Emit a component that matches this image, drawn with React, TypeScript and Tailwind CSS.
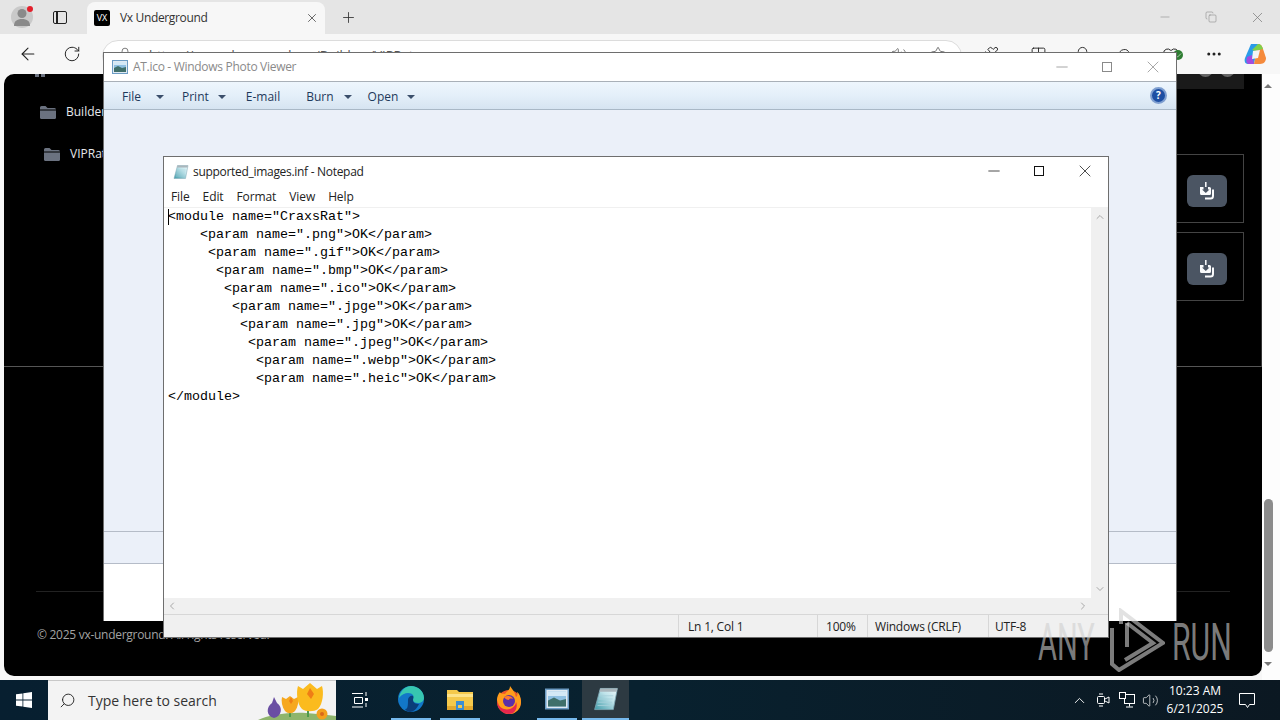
import { ArrowLeft, RotateCw, Plus, X, Minus, Copy, Ellipsis, ChevronUp, ChevronDown, ChevronLeft, ChevronRight, Search, Volume2, Star, Puzzle, Columns2, Bell, Cloud, Heart, Check, Lock } from 'lucide-react';

const noteLines = [
  '<module name="CraxsRat">',
  '    <param name=".png">OK</param>',
  '     <param name=".gif">OK</param>',
  '      <param name=".bmp">OK</param>',
  '       <param name=".ico">OK</param>',
  '        <param name=".jpge">OK</param>',
  '         <param name=".jpg">OK</param>',
  '          <param name=".jpeg">OK</param>',
  '           <param name=".webp">OK</param>',
  '           <param name=".heic">OK</param>',
  '</module>',
];

function FolderIcon() {
  return (
    <svg className="shrink-0" width="16" height="13" viewBox="0 0 16 13">
      <path d="M0 1.500A1.500 1.500 0 0 1 1.500 0h4l2 2h7A1.500 1.500 0 0 1 16 3.500H0z" fill="#6b7280" />
      <path d="M0 4.500h16v7A1.500 1.500 0 0 1 14.500 13h-13A1.500 1.500 0 0 1 0 11.500z" fill="#6b7280" />
    </svg>
  );
}

function DownloadButton() {
  return (
    <div className="flex h-8 w-10 items-center justify-center rounded-md bg-[#4b5563]">
      <svg width="16" height="18" viewBox="0 0 16 18">
        <path d="M6 0h1.600v5H6z" fill="#f3f4f6" />
        <path d="M1 5h3.500v2.500H3L6.800 11l3.700-3.500H9V5h1.500A1.500 1.500 0 0 1 12 6.500v5a1.500 1.500 0 0 1-1.500 1.500h-8A1.500 1.500 0 0 1 1 11.500z" fill="#f9fafb" />
        <path d="M14 7.500v6.500a2.500 2.500 0 0 1-2.500 2.500H6" stroke="#f9fafb" strokeWidth="2" fill="none" />
      </svg>
    </div>
  );
}

function Caret({ color = '#3b4f6b' }: { color?: string }) {
  return (
    <svg width="8" height="4" viewBox="0 0 8 4">
      <path d="M0 0h8L4 4z" fill={color} />
    </svg>
  );
}

function PhotoIcon({ size = 16 }: { size?: number }) {
  return (
    <svg width={size} height={size} viewBox="0 0 16 16">
      <rect x="0.500" y="1.500" width="15" height="13" fill="#dfe9f2" stroke="#6c9cc4" />
      <rect x="2" y="3" width="12" height="10" fill="#8fc0e2" />
      <path d="M2 9l4-2 4 2 4-1v5H2z" fill="#3f6f6a" />
      <path d="M2 3h12v3H2z" fill="#d3e8f6" />
    </svg>
  );
}

function NotepadIcon({ size = 16 }: { size?: number }) {
  return (
    <svg width={size} height={size} viewBox="0 0 16 16">
      <defs>
        <linearGradient id="notePage" x1="0" y1="1" x2="1" y2="0">
          <stop offset="0" stopColor="#3f9aa8" />
          <stop offset="0.600" stopColor="#bfe3ea" />
          <stop offset="1" stopColor="#eef8fa" />
        </linearGradient>
      </defs>
      <path d="M4.500 1.500H15L12.500 14.500H1z" fill="url(#notePage)" stroke="#7ea7b5" strokeWidth="0.500" />
      <path d="M4.500 1.500H15l-.4 2H4z" fill="#aab6bc" />
      <path d="M4 6h8.500M3.600 8h8.500M3.200 10h8.500M2.800 12h8.500" stroke="#a6d0da" strokeWidth="0.500" />
    </svg>
  );
}

function EdgeIcon() {
  return (
    <svg width="26" height="26" viewBox="0 0 26 26">
      <circle cx="13" cy="13" r="13" fill="#1277c8" />
      <path d="M1 12C2 5 7 0 13 0c7 0 13 5 13 12 0 3-3 5-6 5-3 0-5-1-5-3 0-3 1-3 0-5-2-3-10-3-14 3z" fill="#37c6b0" />
      <path d="M10 14c0-3 3-5 5-4 1 1 0 3 0 4 0 3 3 4 6 4-2 5-6 8-9 8-2 0-4-1-5-3 3 1 3-5 3-9z" fill="#0a3e7a" />
    </svg>
  );
}

function ExplorerIcon() {
  return (
    <svg width="26" height="22" viewBox="0 0 26 22">
      <path d="M0 2h10l2 2h14v16H0z" fill="#f5c94c" />
      <path d="M0 6h26v3H0z" fill="#fde38a" />
      <path d="M0 18h26v4H0z" fill="#e3a92f" />
      <rect x="9" y="13" width="8" height="9" fill="#3c8fd6" />
      <rect x="11" y="17" width="4" height="3" fill="#f5c94c" />
    </svg>
  );
}

function FirefoxIcon() {
  return (
    <svg width="26" height="28" viewBox="0 0 26 28">
      <circle cx="13" cy="16" r="12" fill="#f0562c" />
      <path d="M13 28A12 12 0 0 0 25 16c0-5-2-9-4-10 1 3 0 4-1 5-1-5-4-8-6-11 0 4-3 5-5 8-3 0-5-1-5-2-2 2-3 5-3 8 2 6 6 14 12 14z" fill="#ff9d1c" />
      <path d="M13 28c-6 0-11-5-12-11 3 6 10 8 15 5 3-2 4-4 4-6 2 4 0 12-7 12z" fill="#e6264d" />
      <circle cx="13" cy="15" r="6" fill="#5b2fa8" />
      <path d="M8 11c3-2 8-1 9 2-3-1-4 0-4 1-2 0-4-1-5-3z" fill="#ff7a2b" />
    </svg>
  );
}

function Flowers() {
  return (
    <svg className="shrink-0" width="78" height="39" viewBox="0 0 78 39">
      <path d="M0 39c10-5 30-8 48-7 12 1 22 2 30 3v4z" fill="#8fb56c" />
      <path d="M16 37c-8-2-8-11-2-15l2-6 3 6c6 4 5 13-3 15z" fill="#6a4fa3" />
      <path d="M50 36V26M32 36v-6" stroke="#4f9a4a" strokeWidth="2" />
      <path d="M27 30c-3-4-4-10-3-14l4 2 4-3 4 3 4-2c1 4 0 10-3 14-3 3-7 3-10 0z" fill="#f6a81f" />
      <path d="M31 20l2-4 2 4-2 3z" fill="#ef7d16" />
      <path d="M44 28c-5-5-6-17-4-23l5 3 7-6 7 6 5-3c2 6 1 18-4 23-4 3-12 3-16 0z" fill="#fbbb1e" />
      <path d="M49 13l3-6 4 6-3 5z" fill="#ef7d16" />
      <circle cx="64" cy="33" r="5.500" fill="#f3a01d" />
      <circle cx="64" cy="33" r="2" fill="#d9671c" />
    </svg>
  );
}

function WindowButtons({ tone }: { tone: string }) {
  return (
    <>
      <Minus size={18} strokeWidth={1} color={tone} />
      <div className="h-[10px] w-[10px] border" style={{ borderColor: tone }} />
      <X size={20} strokeWidth={0.900} color={tone} />
    </>
  );
}

function BrowserChrome() {
  return (
    <>
      {/* Tab strip */}
      <div className="flex h-[34px] items-center bg-[#e5e5e5]">
        <div className="relative ml-[11px] flex h-[22px] w-[22px] items-center justify-center rounded-full bg-[#c9c9c9]">
          <svg width="16" height="18" viewBox="0 0 16 18">
            <circle cx="8" cy="5.500" r="4.500" fill="#8a8a8a" />
            <path d="M0 18c0-5 3-7 8-7s8 2 8 7z" fill="#8a8a8a" />
          </svg>
          <span className="absolute right-0 top-0 h-[6px] w-[6px] rounded-full bg-[#e3202c]" />
        </div>
        <div className="ml-[20px] h-[13px] w-[14px] rounded-[2px] border-[1.500px] border-[#222] pl-[2px]">
          <div className="h-full w-[1.500px] bg-[#222]" />
        </div>
        <div className="ml-[20px] flex h-[32px] w-[238px] items-center self-end rounded-t-lg bg-[#f7f7f7] pl-[7px] pr-[6px]">
          <div className="flex h-4 w-4 items-center justify-center rounded-[2px] bg-black text-[9px] text-white">VX</div>
          <span className="ml-[10px] flex-1 text-[12px] tracking-[-0.350px] text-[#333]">Vx Underground</span>
          <X size={14} strokeWidth={1.500} color="#555" />
        </div>
        <div className="ml-[15px]">
          <Plus size={17} strokeWidth={1.200} color="#333" />
        </div>
        <div className="ml-auto mr-[14px] flex w-[108px] items-center justify-between">
          <Minus size={14} strokeWidth={1} color="#8a8a8a" />
          <Copy size={12} strokeWidth={1.200} color="#8a8a8a" />
          <X size={17} strokeWidth={1} color="#777" />
        </div>
      </div>
      {/* Toolbar */}
      <div className="flex h-[40px] items-start bg-[#f7f7f7]">
        <div className="ml-[18px] mt-[10px]">
          <ArrowLeft size={20} strokeWidth={1.300} color="#222" />
        </div>
        <div className="ml-[25px] mt-[11px]">
          <RotateCw size={18} strokeWidth={1.300} color="#222" />
        </div>
        <div className="ml-[21px] mt-[6px] flex h-[32px] w-[860px] items-start rounded-full border border-[#dcdcdc] bg-white pl-[15px] pt-[5px] text-[13px] text-[#555]">
          <Lock size={14} strokeWidth={1.300} color="#555" className="mt-[1px]" />
          <span className="ml-[17px]">https://vx-underground.org/Builders/VIPRat</span>
          <div className="ml-auto mr-[15px] flex gap-[23px]">
            <Volume2 size={16} strokeWidth={1.200} color="#555" />
            <Star size={16} strokeWidth={1.200} color="#555" />
          </div>
        </div>
        <div className="ml-[20px] mt-[12px] flex items-start gap-[27px]">
          <Puzzle size={17} strokeWidth={1.300} color="#222" className="mr-[4px]" />
          <Columns2 size={17} strokeWidth={1.300} color="#222" />
          <Bell size={17} strokeWidth={1.300} color="#222" />
          <Cloud size={17} strokeWidth={1.300} color="#222" />
          <div className="relative">
            <Heart size={18} strokeWidth={1.300} color="#222" />
            <span className="absolute -right-[3px] top-[4px] flex h-[10px] w-[10px] items-center justify-center rounded-full bg-[#2e7d32]">
              <Check size={7} color="#fff" />
            </span>
          </div>
        </div>
        <div className="ml-[25px] mt-[11px]">
          <Ellipsis size={18} color="#222" />
        </div>
        <div className="ml-[21px] mt-[10px]">
          <svg width="22" height="20" viewBox="0 0 22 20">
            <path d="M7 0h7l-4 20H4C1 20 0 17 1 14z" fill="#2a9be8" />
            <path d="M14 0c3 0 4 2 5 5l3 9c0 3-2 6-6 6h-6z" fill="#f58a3c" />
            <path d="M14 0c3 0 4 2 5 5l-8 2-3-1z" fill="#7fd14b" />
            <path d="M3 13l5-2 2 9H5c-3 0-3-3-2-7z" fill="#a24be0" />
            <path d="M9 7l7-1-2 8-6 1z" fill="#f4f4f4" />
          </svg>
        </div>
      </div>
    </>
  );
}

function PageBehind() {
  return (
    <div className="flex min-h-0 flex-1 bg-[#f7f7f7] pl-[4px]">
      <div className="mb-[4px] flex flex-1 flex-col overflow-hidden rounded-b-[10px] rounded-l-[10px] bg-black">
        <div className="flex h-[293px] shrink-0 border-b border-r border-b-[#555] border-r-[#333]">
          <div className="w-[100px] shrink-0">
            <div className="ml-[31px] flex h-[3px] gap-[2px]">
              <span className="w-[4px] bg-[#6b7280]" />
              <span className="w-[4px] bg-[#6b7280]" />
            </div>
            <div className="ml-[36px] mt-[27px] flex h-[16px] items-center gap-[10px] text-[12px] text-[#e5e7eb]">
              <FolderIcon />
              <span>Builders</span>
            </div>
            <div className="ml-[40px] mt-[26px] flex h-[16px] items-center gap-[10px] text-[12px] text-[#e5e7eb]">
              <FolderIcon />
              <span>VIPRat</span>
            </div>
          </div>
          <div className="flex flex-1 flex-col items-end pr-[17px]">
            <div className="flex h-[15px] w-[300px] items-end justify-end gap-[7px] overflow-hidden bg-[#1a1a1a] pr-[9px]">
              <span className="mb-[12px] h-[15px] w-[15px] rounded-full bg-[#666]" />
              <span className="mb-[12px] h-[15px] w-[15px] rounded-full bg-[#666]" />
            </div>
            <div className="mt-[65px] flex h-[69px] w-[800px] items-center justify-end border border-[#444] pr-[16px] pt-[4px]">
              <DownloadButton />
            </div>
            <div className="mt-[9px] flex h-[69px] w-[800px] items-center justify-end border border-[#444] pr-[16px] pt-[4px]">
              <DownloadButton />
            </div>
          </div>
        </div>
        <div className="mx-[32px] mt-[224px] border-t border-[#222] pl-[1px] pt-[34px] text-[12px] tracking-[-0.280px] text-[#a3a3a3]">
          © 2025 vx-underground. All rights reserved.
        </div>
      </div>
      <div className="flex w-[18px] shrink-0 flex-col items-center bg-[#fdfdfd] pb-[14px] pr-[6px] pt-[10px]">
        <svg className="rotate-180" width="8" height="4" viewBox="0 0 8 4">
          <path d="M0 0h8L4 4z" fill="#777" />
        </svg>
        <div className="mt-auto h-[153px] w-[9px] rounded-full bg-[#8c8c8c]" />
        <div className="mt-[10px] flex">
          <Caret color="#777" />
        </div>
      </div>
    </div>
  );
}

function PhotoViewer() {
  return (
    <div className="absolute left-[103px] top-[52px] flex h-[569px] w-[1074px] flex-col border-x border-t border-[#6e6e6e] bg-white">
      <div className="flex h-[29px] shrink-0 items-center border-b border-[#a9b0b8] pl-[8px] pr-[13px] text-[12px] tracking-[-0.300px] text-[#8a8a8a]">
        <PhotoIcon />
        <span className="ml-[5px] flex-1">AT.ico - Windows Photo Viewer</span>
        <div className="flex w-[110px] items-center justify-between">
          <WindowButtons tone="#8a8a8a" />
        </div>
      </div>
      <div className="flex h-[28px] shrink-0 items-center border-b border-[#a9b8c6] bg-gradient-to-b from-[#eef6fd] via-[#e4eff9] to-[#d6e4f1] pl-[18px] pr-[9px] pt-[3px] text-[12px] text-[#1e395b]">
        <span>File</span>
        <span className="ml-[15px]"><Caret /></span>
        <span className="ml-[18px]">Print</span>
        <span className="ml-[9px]"><Caret /></span>
        <span className="ml-[20px]">E-mail</span>
        <span className="ml-[26px]">Burn</span>
        <span className="ml-[10px]"><Caret /></span>
        <span className="ml-[16px]">Open</span>
        <span className="ml-[9px]"><Caret /></span>
        <div className="-mt-[3px] ml-auto flex h-[17px] w-[17px] items-center justify-center rounded-full border-2 border-[#7f9fd0] bg-[#1d4fa3] text-[10px] font-bold text-white">?</div>
      </div>
      <div className="flex-1 border-b border-[#b5bcc8] bg-[#ebf0f9]" />
      <div className="h-[32px] shrink-0 border-b border-[#b5bcc8] bg-[#ebf0f9]" />
      <div className="h-[57px] shrink-0 bg-white" />
    </div>
  );
}

function Notepad() {
  return (
    <div className="absolute left-[163px] top-[156px] flex h-[482px] w-[946px] flex-col border border-[#6e6e6e] bg-white">
      <div className="flex h-[28px] shrink-0 items-center pl-[9px] pr-[13px] pt-[1px] text-[12px] tracking-[-0.300px] text-[#222]">
        <NotepadIcon />
        <span className="ml-[4px] flex-1">supported_images.inf - Notepad</span>
        <div className="-mt-[1px] flex w-[110px] items-center justify-between">
          <WindowButtons tone="#111" />
        </div>
      </div>
      <div className="flex h-[23px] shrink-0 items-center gap-[13px] border-b border-[#f0f0f0] pl-[7px] pt-[1px] text-[12px] tracking-[-0.100px] text-[#222]">
        <span>File</span>
        <span>Edit</span>
        <span>Format</span>
        <span>View</span>
        <span>Help</span>
      </div>
      <div className="flex min-h-0 flex-1">
        <div className="relative flex-1 overflow-hidden pl-[4px] font-['Liberation_Mono',monospace] text-[13.330px] leading-[18px] text-black">
          {noteLines.map((line, i) => (
            <div key={i} className="h-[18px] whitespace-pre">{line}</div>
          ))}
          <span className="absolute left-[4px] top-[1px] h-[16px] w-px bg-black" />
        </div>
        <div className="flex w-[17px] shrink-0 flex-col items-center justify-between bg-[#f0f0f0] py-[3px]">
          <ChevronUp size={12} color="#a8a8a8" strokeWidth={2} />
          <ChevronDown size={12} color="#a8a8a8" strokeWidth={2} />
        </div>
      </div>
      <div className="flex h-[16px] shrink-0 items-center justify-between bg-[#f0f0f0] pl-[2px] pr-[19px]">
        <ChevronLeft size={12} color="#a8a8a8" strokeWidth={2} />
        <ChevronRight size={12} color="#a8a8a8" strokeWidth={2} />
      </div>
      <div className="flex h-[23px] shrink-0 items-center border-t border-[#d7d7d7] bg-[#f0f0f0] text-[12px] tracking-[-0.200px] text-[#222]">
        <div className="w-[514px] shrink-0" />
        <div className="h-full w-[139px] shrink-0 border-l border-[#d7d7d7] pl-[9px] leading-[24px]">Ln 1, Col 1</div>
        <div className="h-full w-[50px] shrink-0 border-l border-[#d7d7d7] pl-[8px] leading-[24px]">100%</div>
        <div className="h-full w-[121px] shrink-0 border-l border-[#d7d7d7] pl-[7px] leading-[24px]">Windows (CRLF)</div>
        <div className="h-full flex-1 border-l border-[#d7d7d7] pl-[6px] leading-[24px]">UTF-8</div>
      </div>
    </div>
  );
}

function Watermark() {
  return (
    <div className="pointer-events-none absolute left-[1038px] top-[608px] flex h-[64px] w-[194px] items-center text-[rgba(207,207,207,0.6)]">
      <span className="w-[58px] origin-left scale-x-[0.56] whitespace-nowrap pt-[6px] font-['Roboto',sans-serif] text-[52px] font-normal leading-[64px]">ANY</span>
      <svg className="ml-[13px] shrink-0" width="56" height="64" viewBox="0 0 56 64" fill="none" stroke="rgba(207,207,207,0.6)" strokeWidth="4">
        <path d="M12 16V3l42 32-44 27-7-6V20" />
        <path d="M18 15l26 20-28 17" />
        <path d="M18 15v24" />
      </svg>
      <span className="ml-[7px] w-[58px] origin-left scale-x-[0.58] whitespace-nowrap pt-[6px] font-['Roboto',sans-serif] text-[52px] font-normal leading-[64px]">RUN</span>
    </div>
  );
}

function Taskbar() {
  return (
    <div className="flex h-[40px] shrink-0 items-stretch bg-gradient-to-r from-[#071f30] via-[#08212f] to-[#0b1822] text-white">
      <div className="flex w-[48px] items-center justify-center">
        <svg width="16" height="16" viewBox="0 0 16 16">
          <path d="M0 2.300l6.500-.9v6.200H0zM7.300 1.300L16 0v7.600H7.300zM0 8.400h6.500v6.200L0 13.700zM7.300 8.400H16V16l-8.700-1.200z" fill="#fff" />
        </svg>
      </div>
      <div className="flex w-[288px] items-center overflow-hidden border-t border-[#c8c8c8] bg-[#f3f3f3] pl-[11px] text-[14px] text-[#333]">
        <Search size={17} strokeWidth={1.300} color="#222" className="-scale-x-100" />
        <span className="ml-[12px] flex-1">Type here to search</span>
        <Flowers />
      </div>
      <div className="flex w-[48px] items-center justify-center">
        <svg width="16" height="16" viewBox="0 0 16 16" fill="none" stroke="#fff">
          <path d="M0 1.500h11M2.500 5.500h8v6h-8zM0 15h11M14 0v4M14 11v4" />
          <rect x="13" y="6" width="3" height="3" fill="#fff" stroke="none" />
        </svg>
      </div>
      <div className="ml-[7px] flex w-[40px] items-center justify-center border-b-[2px] border-[#76b9ed]"><EdgeIcon /></div>
      <div className="ml-[9px] flex w-[40px] items-center justify-center border-b-[2px] border-[#76b9ed]"><ExplorerIcon /></div>
      <div className="ml-[9px] flex w-[40px] items-center justify-center"><FirefoxIcon /></div>
      <div className="ml-[8px] flex w-[40px] items-center justify-center border-b-[2px] border-[#76b9ed]"><PhotoIcon size={24} /></div>
      <div className="ml-[5px] flex w-[47px] items-center justify-center border-b-[2px] border-[#76b9ed] bg-[#2d3a42]"><NotepadIcon size={26} /></div>
      <div className="ml-auto flex items-center pr-[17px]">
        <ChevronUp size={17} strokeWidth={1.300} color="#fff" />
        <svg className="ml-[8px]" width="14" height="16" viewBox="0 0 14 16" fill="none" stroke="#fff">
          <rect x="1.500" y="4.500" width="7" height="7" rx="1" />
          <path d="M9 7l4-2v6l-4-2M3 2h4M3 14h4" />
        </svg>
        <svg className="ml-[9px]" width="16" height="16" viewBox="0 0 16 16" fill="none" stroke="#fff">
          <rect x="5.500" y="2.500" width="10" height="9" />
          <rect x="0.500" y="0.500" width="6" height="6" fill="#0b1822" />
          <path d="M10.500 11.500v3M7 15h7" />
        </svg>
        <Volume2 size={17} strokeWidth={1} color="#fff" className="ml-[7px]" />
        <div className="w-[72px] text-center text-[12px] leading-[18px]">
          <div>10:23 AM</div>
          <div>6/21/2025</div>
        </div>
        <div className="flex w-[32px] items-center justify-center">
          <svg width="16" height="15" viewBox="0 0 16 15" fill="none" stroke="#fff">
            <path d="M0.500 0.500h15v11h-5l-2 3-2-3h-6z" />
          </svg>
        </div>
      </div>
    </div>
  );
}

export default function App() {
  return (
    <div className="relative flex h-[720px] w-[1280px] flex-col overflow-hidden font-['Open_Sans',sans-serif]">
      <BrowserChrome />
      <PageBehind />
      <Taskbar />
      <PhotoViewer />
      <Notepad />
      <Watermark />
    </div>
  );
}
